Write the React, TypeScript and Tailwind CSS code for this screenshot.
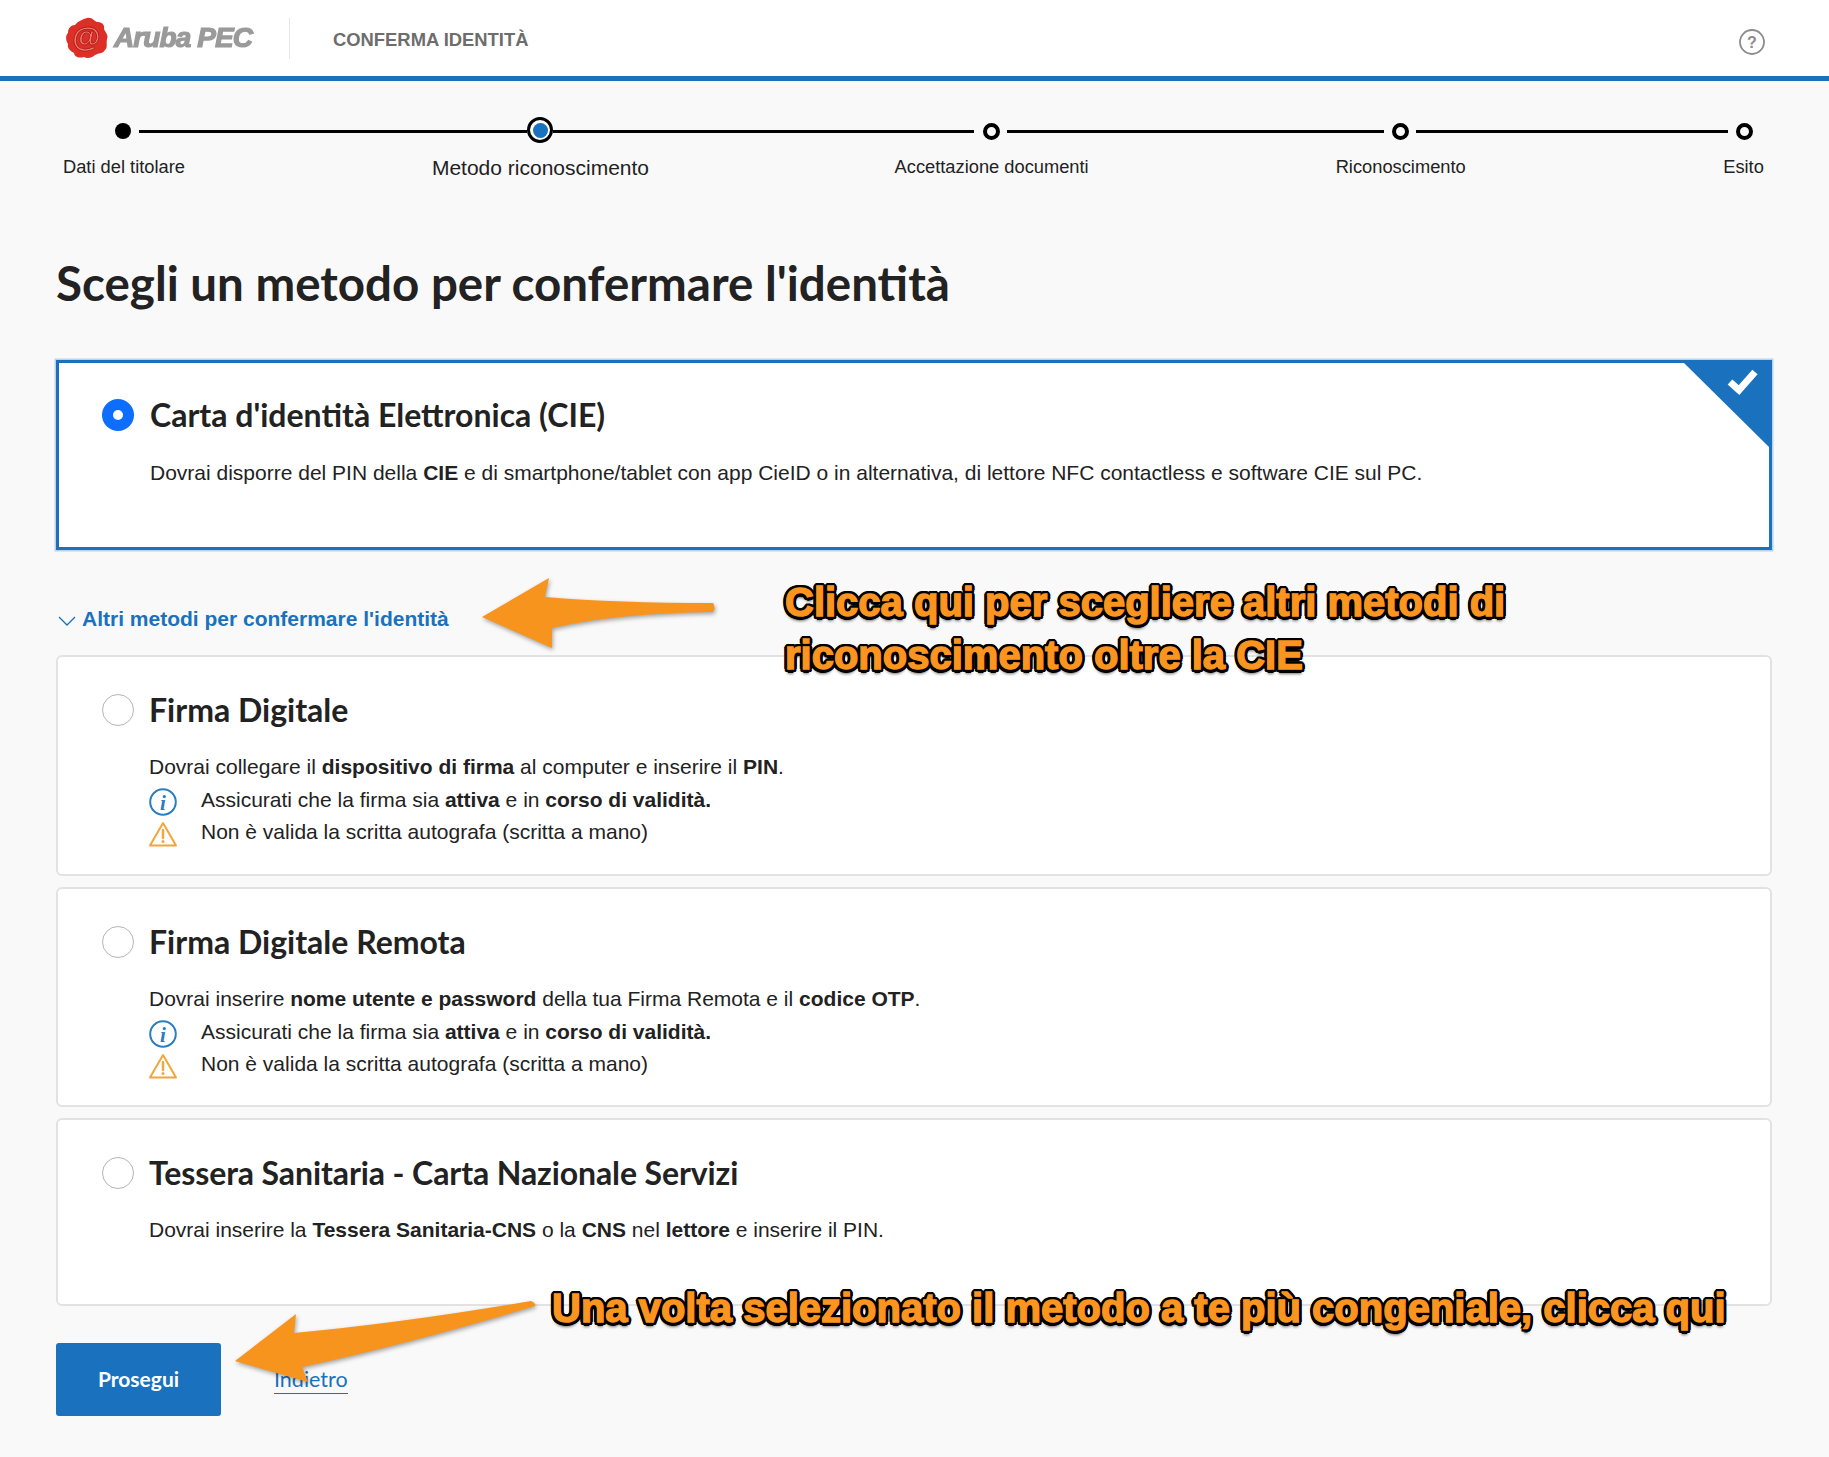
import type { ReactNode } from 'react';

const steps = [
  { label: 'Dati del titolare', className: 'ml-[63px] text-[18.3px]' },
  { label: 'Metodo riconoscimento', className: 'ml-[247px] translate-y-px text-[21px]' },
  { label: 'Accettazione documenti', className: 'ml-[245.5px] text-[18.3px]' },
  { label: 'Riconoscimento', className: 'ml-[247px] text-[18.3px]' },
  { label: 'Esito', className: 'ml-[257.5px] text-[18.3px]' },
];

function InfoIcon() {
  return (
    <svg width="28" height="28" viewBox="0 0 28 28" className="shrink-0">
      <circle cx="14" cy="14" r="12.8" fill="none" stroke="#2b7cc0" strokeWidth="2" />
      <text x="14" y="21.5" textAnchor="middle" fontFamily="Liberation Serif" fontStyle="italic" fontWeight="700" fontSize="21" fill="#2b7cc0">
        i
      </text>
    </svg>
  );
}

function WarningIcon() {
  return (
    <svg width="28" height="26" viewBox="0 0 28 26" className="shrink-0">
      <path d="M14 2 L27 24.5 H1 Z" fill="none" stroke="#f3a43a" strokeWidth="2" strokeLinejoin="round" />
      <path d="M14 9 V17" stroke="#f3a43a" strokeWidth="2.4" strokeLinecap="round" />
      <circle cx="14" cy="20.6" r="1.5" fill="#f3a43a" />
    </svg>
  );
}

function Radio({ checked }: { checked?: boolean }) {
  if (checked) {
    return (
      <span className="flex h-8 w-8 shrink-0 items-center justify-center rounded-full bg-[#0d6efd]">
        <span className="h-[10px] w-[10px] rounded-full bg-white" />
      </span>
    );
  }
  return <span className="h-8 w-8 shrink-0 rounded-full border border-[#b5b5b5] bg-white" />;
}

function Note({ icon, children }: { icon: ReactNode; children: ReactNode }) {
  return (
    <div className="flex h-[32.5px] items-center">
      <span className="flex w-[52px] shrink-0 translate-y-[2px] items-center">{icon}</span>
      <span>{children}</span>
    </div>
  );
}

function MethodCard({
  title,
  titleClass,
  description,
  notes,
  heightClass,
}: {
  title: string;
  titleClass?: string;
  description: ReactNode;
  notes?: boolean;
  heightClass: string;
}) {
  return (
    <div className={`rounded-[6px] border-2 border-[#e2e2e2] bg-white pl-[44px] pt-[37px] ${heightClass}`}>
      <div className="flex h-8 items-center gap-[15px]">
        <Radio />
        <h3 className={`font-['Lato',sans-serif] text-[32px] font-bold text-[#222] ${titleClass ?? ''}`}>{title}</h3>
      </div>
      <div className="ml-[47px] mt-[25px] text-[21px] leading-[32.5px] text-[#222]">
        <p>{description}</p>
        {notes && (
          <>
            <Note icon={<InfoIcon />}>
              Assicurati che la firma sia <b>attiva</b> e in <b>corso di validità.</b>
            </Note>
            <Note icon={<WarningIcon />}>Non è valida la scritta autografa (scritta a mano)</Note>
          </>
        )}
      </div>
    </div>
  );
}

const calloutClass =
  'absolute whitespace-nowrap font-bold text-[#fb951f] [-webkit-text-stroke:1.4px_#fb951f] [text-shadow:3.5px_0_0_#000,-3.5px_0_0_#000,0_3.5px_0_#000,0_-3.5px_0_#000,2.5px_2.5px_0_#000,-2.5px_2.5px_0_#000,2.5px_-2.5px_0_#000,-2.5px_-2.5px_0_#000,3px_1.5px_0_#000,-3px_1.5px_0_#000,3px_-1.5px_0_#000,-3px_-1.5px_0_#000,1.5px_3px_0_#000,-1.5px_3px_0_#000,1.5px_-3px_0_#000,-1.5px_-3px_0_#000,0_5px_3px_rgba(0,0,0,0.55)]';

export default function App() {
  return (
    <div className="relative h-[1457px] w-full overflow-hidden bg-[#f9f9f9] font-['Liberation_Sans',sans-serif] text-[#222]">
      {/* Header */}
      <header className="flex h-[81px] items-center border-b-[5px] border-[#1a71bd] bg-white pl-[65px] pr-[64px]">
        <svg width="44" height="42" viewBox="0 0 44 42" className="-mt-[1px] shrink-0 blur-[0.3px]">
          <path
            d="M22 1 C27 0 29 4 32 5 C36 5 40 7 39 12 C40 15 44 18 42 22 C41 26 43 30 40 33 C38 37 33 36 30 38 C27 41 22 42 19 40 C15 41 10 41 9 36 C6 34 2 32 3 27 C1 24 0 19 3 16 C3 11 6 8 10 8 C13 4 18 2 22 1Z"
            fill="#dd2f28"
          />
          <text x="21.5" y="30" textAnchor="middle" fontFamily="Liberation Sans" fontWeight="700" fontSize="29" fill="#f4796a" stroke="#a81f1a" strokeWidth="0.8">
            @
          </text>
        </svg>
        <span className="-mt-[1px] ml-[5px] w-[139px] whitespace-nowrap text-[28px] font-bold italic leading-none tracking-[-0.9px] text-[#9a9a9a] blur-[0.4px] [-webkit-text-stroke:1.2px_#9a9a9a]">
          Aruba PEC
        </span>
        <span className="ml-[36px] h-[41px] w-px bg-[#e5e5e5]" />
        <span className="ml-[43px] mt-[3px] text-[18.4px] font-bold text-[#6d6d6d]">CONFERMA IDENTITÀ</span>
        <svg width="26" height="26" viewBox="0 0 26 26" className="ml-auto mt-[7px]">
          <circle cx="13" cy="13" r="12" fill="none" stroke="#8c8c8c" strokeWidth="1.8" />
          <text x="13" y="18.5" textAnchor="middle" fontFamily="Liberation Sans" fontWeight="700" fontSize="16" fill="#8c8c8c">
            ?
          </text>
        </svg>
      </header>

      {/* Stepper */}
      <div className="ml-[115px] mt-[37px] flex h-[26px] items-center">
        <span className="h-4 w-4 rounded-full bg-black" />
        <span className="ml-[8px] h-[3px] w-[388px] bg-black" />
        <span className="flex h-[26px] w-[26px] -translate-y-px items-center justify-center rounded-full border-[3px] border-black bg-white">
          <span className="h-[15px] w-[15px] rounded-full bg-[#1a71bd]" />
        </span>
        <span className="h-[3px] w-[421px] bg-black" />
        <span className="ml-[9px] h-[17px] w-[17px] rounded-full border-[4px] border-black" />
        <span className="ml-[7px] h-[3px] w-[377px] bg-black" />
        <span className="ml-[8px] h-[17px] w-[17px] rounded-full border-[4px] border-black" />
        <span className="ml-[7px] h-[3px] w-[312px] bg-black" />
        <span className="ml-[8px] h-[17px] w-[17px] rounded-full border-[4px] border-black" />
      </div>
      <div className="mt-[11px] flex h-6 items-center whitespace-nowrap">
        {steps.map((step) => (
          <span key={step.label} className={step.className}>
            {step.label}
          </span>
        ))}
      </div>

      <main className="pl-[56px] pr-[57px]">
        <h1 className="mt-[76px] font-['Lato',sans-serif] text-[47.5px] font-bold leading-[56px] text-[#222]">
          Scegli un metodo per confermare l'identità
        </h1>

        {/* Selected method */}
        <div className="relative mt-[49px] h-[190px] border-[3px] border-[#1a71bd] bg-white pl-[43px] pt-[36px] shadow-[0_0_0_1.5px_#b9d3ea]">
          <div className="flex h-8 items-center gap-4">
            <Radio checked />
            <h3 className="font-['Lato',sans-serif] text-[32px] font-bold text-[#222]">Carta d'identità Elettronica (CIE)</h3>
          </div>
          <p className="ml-[48px] mt-[26px] text-[21px] leading-[32px]">
            Dovrai disporre del PIN della <b>CIE</b> e di smartphone/tablet con app CieID o in alternativa, di lettore NFC contactless e software CIE sul PC.
          </p>
          <svg width="86" height="86" viewBox="0 0 86 86" className="absolute right-0 top-0">
            <path d="M1 0 H86 V84 Z" fill="#1a71bd" />
            <path d="M47 19 L56 27 L72 9" fill="none" stroke="#fff" strokeWidth="7" />
          </svg>
        </div>

        {/* Other methods */}
        <div className="mt-[57px] flex h-6 items-center">
          <svg width="18" height="10" viewBox="0 0 18 10" className="ml-[2px] mt-[4px] shrink-0">
            <path d="M1 1 L9 9 L17 1" fill="none" stroke="#1a71bd" strokeWidth="1.3" />
          </svg>
          <span className="ml-[6px] text-[21px] font-bold text-[#1a71bd]">Altri metodi per confermare l'identità</span>
        </div>

        <div className="mt-[24px] flex flex-col gap-[11px]">
          <MethodCard
            title="Firma Digitale"
            heightClass="h-[221px]"
            notes
            description={
              <>
                Dovrai collegare il <b>dispositivo di firma</b> al computer e inserire il <b>PIN</b>.
              </>
            }
          />
          <MethodCard
            title="Firma Digitale Remota"
            heightClass="h-[220px]"
            notes
            description={
              <>
                Dovrai inserire <b>nome utente e password</b> della tua Firma Remota e il <b>codice OTP</b>.
              </>
            }
          />
          <MethodCard
            title="Tessera Sanitaria - Carta Nazionale Servizi"
            titleClass="tracking-[-0.1px]"
            heightClass="h-[188px]"
            description={
              <>
                Dovrai inserire la <b>Tessera Sanitaria-CNS</b> o la <b>CNS</b> nel <b>lettore</b> e inserire il PIN.
              </>
            }
          />
        </div>

        {/* Actions */}
        <div className="mt-[37px] flex items-center">
          <button className="h-[73px] w-[165px] rounded-[3px] bg-[#1a71bd] pb-[2px] font-['Lato',sans-serif] text-[21px] font-bold text-white">
            Prosegui
          </button>
          <a className="ml-[53px] border-b border-[#1a71bd] font-['Lato',sans-serif] text-[21.5px] leading-[27px] text-[#1a71bd]">
            Indietro
          </a>
        </div>
      </main>

      {/* Annotations drawn over the page */}
      <svg width="240" height="76" viewBox="0 0 240 76" className="absolute left-[478px] top-[575px] drop-shadow-[1px_2px_2px_rgba(0,0,0,0.35)]">
        <path d="M4 42 L71 3 L67 22 Q140 28 235 28 Q238 33 235 37 Q140 38 74 53 L74 73 Z" fill="#f7941d" />
      </svg>
      <svg width="310" height="90" viewBox="0 0 310 90" className="absolute left-[232px] top-[1298px] drop-shadow-[1px_2px_2px_rgba(0,0,0,0.35)]">
        <path d="M3 63 L64 16 L62 35 Q170 25 299 3 Q304 5 303 8 Q180 45 70 69 L76 84 Z" fill="#f7941d" />
      </svg>
      <div className={`${calloutClass} left-[785px] top-[576px] text-[40px] leading-[53px]`}>
        Clicca qui per scegliere altri metodi di
        <br />
        riconoscimento oltre la CIE
      </div>
      <div className={`${calloutClass} left-[552px] top-[1282px] text-[40px] leading-[53px]`}>
        Una volta selezionato il metodo a te più congeniale, clicca qui
      </div>
    </div>
  );
}
